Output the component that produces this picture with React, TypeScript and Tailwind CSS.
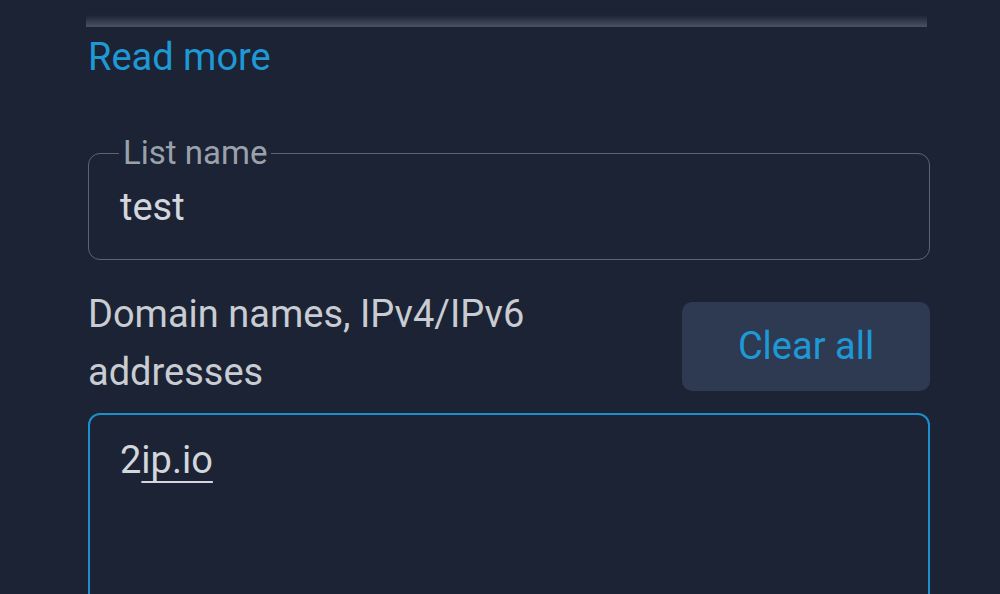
export default function App() {
  return (
    <div className="h-[594px] overflow-hidden bg-[#1b2334] pl-[88px] pr-[70px] font-['Roboto',sans-serif]">
      {/* bottom edge of the card above, fading into the page */}
      <div className="mt-[15px] -ml-[2px] mr-[3px] h-[12px] bg-gradient-to-b from-[#1b2334] to-[#4a5264]" />

      <a className="mt-[8px] block text-[38px] leading-[44px] text-[#1f98d6]">Read more</a>

      <fieldset className="mt-[58px] h-[123px] rounded-[12px] border-[1.5px] border-[#5b6474] pl-[30px]">
        <legend className="px-[4px] text-[33px] leading-[32px] text-[#9aa1ac]">List name</legend>
        <div className="mt-[16px] pl-[1px] text-[38px] leading-[44px] text-[#d3d6dc]">test</div>
      </fieldset>

      <div className="mt-[25px] flex items-start justify-between">
        <div className="w-[470px] text-[38px] leading-[58px] text-[#c9ccd2]">
          Domain names, IPv4/IPv6 addresses
        </div>
        <button
          type="button"
          className="mt-[17px] h-[89px] w-[248px] shrink-0 rounded-[10px] bg-[#2d3a52] text-[38px] text-[#1f98d6]"
        >
          Clear all
        </button>
      </div>

      <div className="mt-[12px] h-[220px] rounded-[12px] border-2 border-[#1e8fcd] px-[30px] pt-[23px]">
        <div className="text-[38px] leading-[44px] text-[#d3d6dc]">
          2<span className="underline decoration-[2px] underline-offset-[8px]">ip.io</span>
        </div>
      </div>
    </div>
  );
}
